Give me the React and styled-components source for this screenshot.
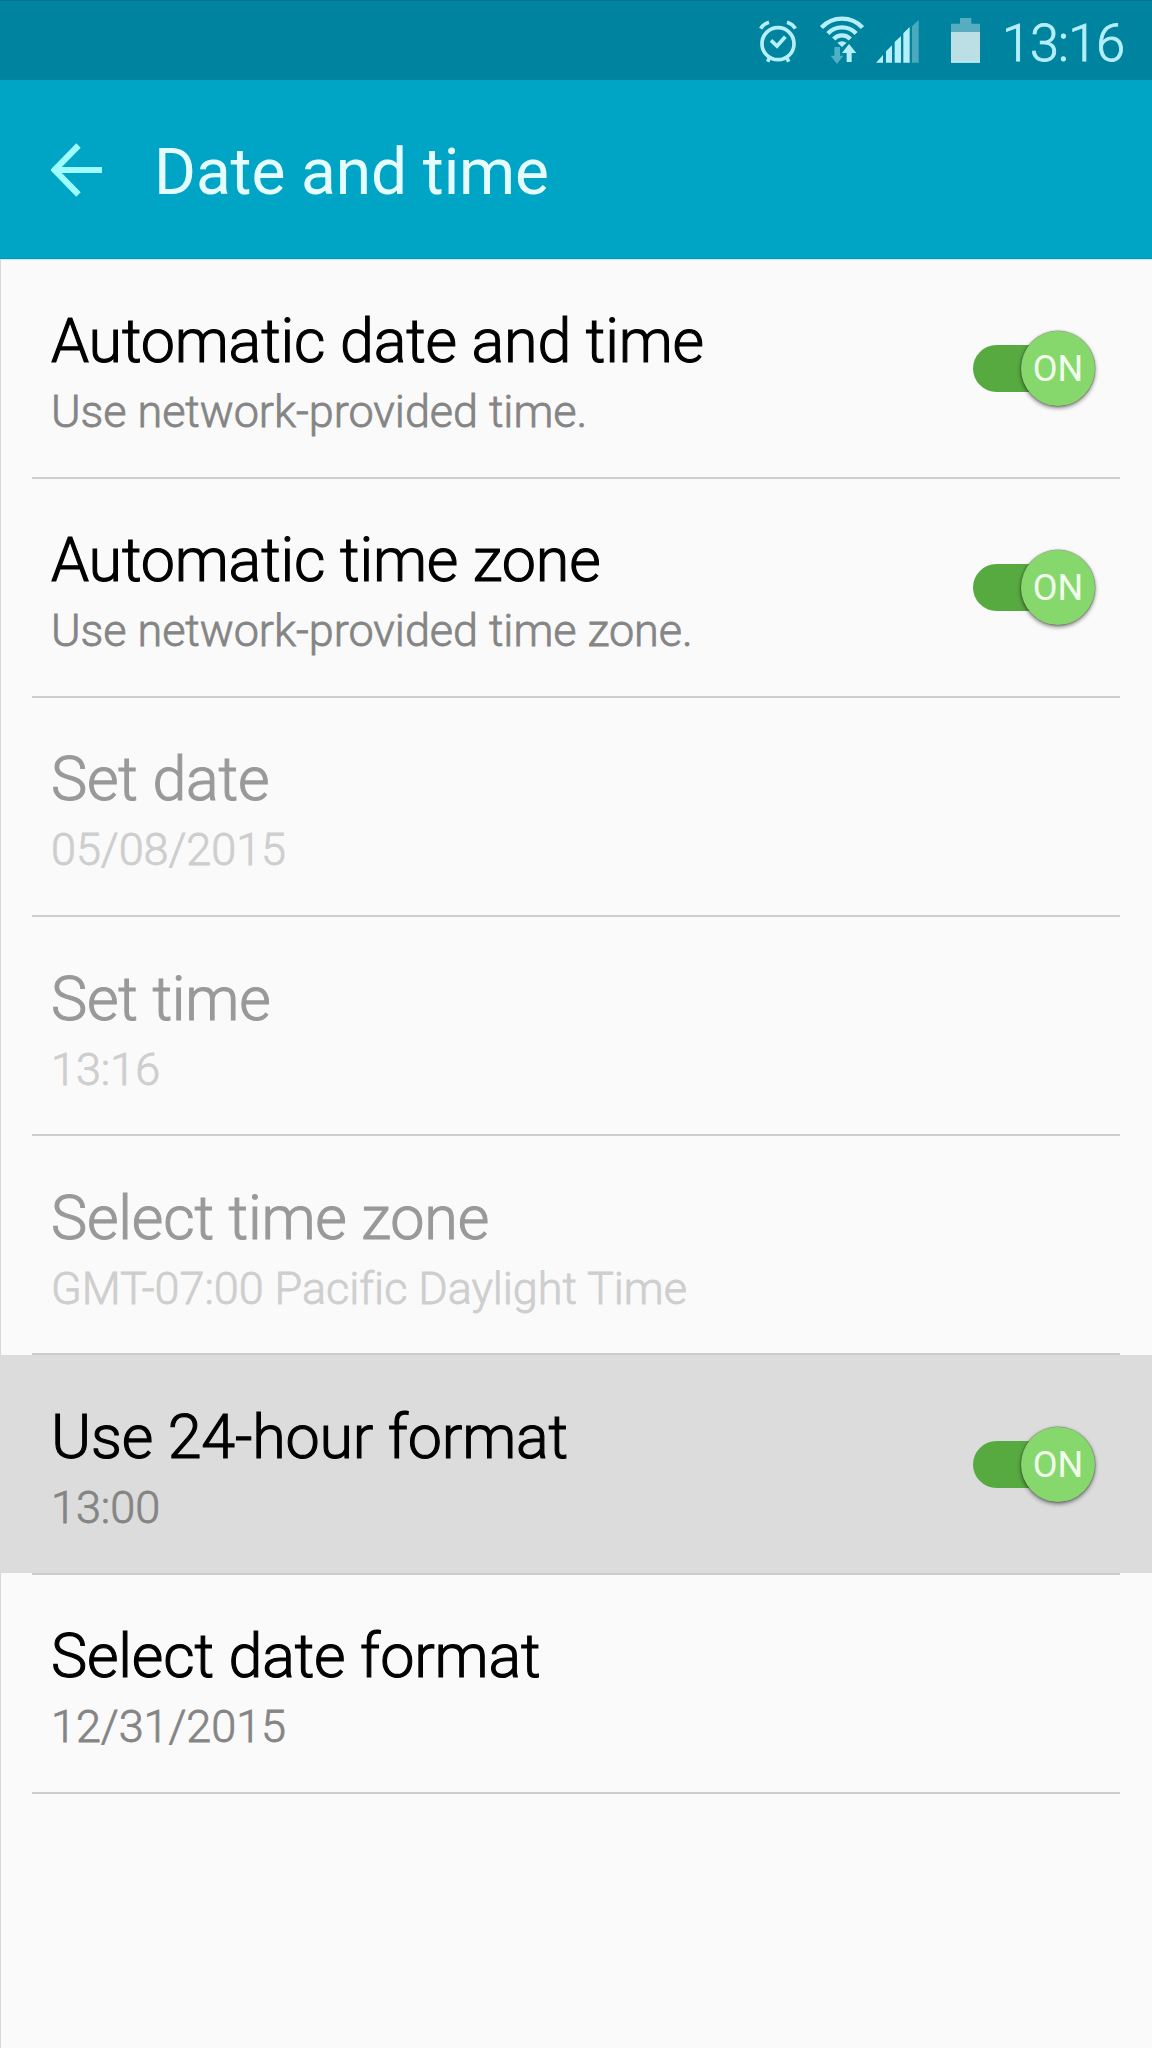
import React, { useState } from "react";
import styled, { createGlobalStyle } from "styled-components";

const GlobalStyle = createGlobalStyle`
  body {
    margin: 0;
    background: #fafafa;
  }
`;

const Screen = styled.div`
  box-sizing: border-box;
  width: 1152px;
  height: 2048px;
  overflow: hidden;
  background: #fafafa;
  font-family: Roboto, "Liberation Sans", sans-serif;
  box-shadow: inset 1px 0 0 #d8d8d8;
`;

const StatusBar = styled.div`
  box-sizing: border-box;
  display: flex;
  align-items: flex-start;
  justify-content: flex-end;
  height: 80px;
  padding-right: 28px;
  background: #00839e;
  border-top: 1px solid #00728c;
`;

const StatusIcon = styled.svg`
  display: block;
  flex: none;
  height: 80px;
  margin-top: -1px;
  margin-right: ${(props) => props.$gap}px;
`;

const Clock = styled.span`
  width: 122px;
  font-size: 52px;
  font-weight: 300;
  letter-spacing: -0.8px;
  line-height: 60px;
  padding-top: 13px;
  white-space: nowrap;
  color: #b5effb;
  -webkit-text-stroke: 0.8px #b5effb;
`;

const AppBar = styled.header`
  box-sizing: border-box;
  display: flex;
  align-items: center;
  height: 179.4px;
  padding: 0 51px;
  background: #00a5c6;
  border-bottom: 1px solid #0098b8;
  box-shadow: 0 1px 0 #c4e9f2;
`;

const BackIcon = styled.svg`
  display: block;
  width: 52px;
  height: 54px;
  margin-top: 1px;
  margin-right: 51px;
`;

const Title = styled.h1`
  margin: 0;
  padding-top: 8px;
  font-size: 64px;
  line-height: 76px;
  font-weight: 400;
  letter-spacing: -0.1px;
  color: #e6fdff;
`;

const Row = styled.div`
  box-sizing: border-box;
  display: flex;
  align-items: center;
  justify-content: space-between;
  height: 217.2px;
  padding: 0 57px 0 51px;
  background: ${(props) => (props.$pressed ? "#dcdcdc" : "transparent")};
`;

const Divider = styled.div`
  height: 2px;
  margin: 0 32px;
  background: #cdcdcd;
`;

const Labels = styled.div`
  padding-top: 11px;
`;

const Label = styled.div`
  font-size: 61px;
  font-weight: 300;
  letter-spacing: -0.2px;
  line-height: 72px;
  color: ${(props) => (props.$disabled ? "#999999" : "#000000")};
  -webkit-text-stroke: 1.1px currentColor;
`;

const Summary = styled.div`
  padding-top: 5px;
  font-size: 45px;
  font-weight: 300;
  letter-spacing: -0.05px;
  line-height: 60px;
  color: ${(props) => (props.$disabled ? "#cecece" : "#858585")};
  -webkit-text-stroke: 0.8px currentColor;
`;

const Switch = styled.button`
  display: flex;
  align-items: center;
  justify-content: flex-end;
  width: 122px;
  height: 47px;
  margin-top: 1px;
  padding: 0;
  border: none;
  border-radius: 24px;
  background: linear-gradient(90deg, #57aa40 75px, transparent 75px);
`;

const Thumb = styled.span`
  flex: none;
  width: 74px;
  height: 75px;
  border-radius: 50%;
  background: #86d86d;
  box-shadow: 0 0 1px 0.5px rgba(60, 60, 60, 0.5), 0 2px 4px rgba(0, 0, 0, 0.5);
  font-family: Roboto, "Liberation Sans", sans-serif;
  font-size: 36px;
  line-height: 76px;
  text-align: center;
  color: #f2ffec;
`;

const items = [
  {
    id: "auto-date",
    label: "Automatic date and time",
    summary: "Use network-provided time.",
    toggle: true,
  },
  {
    id: "auto-zone",
    label: "Automatic time zone",
    summary: "Use network-provided time zone.",
    toggle: true,
  },
  { id: "date", label: "Set date", summary: "05/08/2015", disabled: true },
  { id: "time", label: "Set time", summary: "13:16", disabled: true },
  {
    id: "zone",
    label: "Select time zone",
    summary: "GMT-07:00 Pacific Daylight Time",
    disabled: true,
  },
  {
    id: "hour-format",
    label: "Use 24-hour format",
    summary: "13:00",
    toggle: true,
  },
  { id: "date-format", label: "Select date format", summary: "12/31/2015" },
];

const AlarmIcon = () => (
  <StatusIcon $gap={23} width="38" viewBox="58 0 114 240">
    <g fill="none" stroke="#b5effb" strokeWidth="11">
      <circle cx="115" cy="131" r="48" />
      <path d="M94 121l18 17 25-28" />
      <path d="M63 86q8-14 25-19M167 86q-8-14-25-19" />
      <path d="M90 172l-6 13M141 172l6 13" />
    </g>
  </StatusIcon>
);

const WifiIcon = () => (
  <StatusIcon $gap={12} width="44" viewBox="240 0 132 240">
    <g fill="none" stroke="#b5effb" strokeWidth="13">
      <path d="M244.6 82.7a84 84 0 0 1 122.8 0" />
      <path d="M263.6 100.4a58 58 0 0 1 84.8 0" />
      <path d="M281.1 116.8a34 34 0 0 1 49.8 0" />
    </g>
    <path d="M292 128q14-9 28 0l-14 13z" fill="#b5effb" />
    <path d="M283 141h17v26h10l-19 25-19-25h11z" fill="#4fb0c5" />
    <path
      d="M327 132l22 27h-14v27h-15v-27h-14z"
      fill="#b5effb"
      stroke="#00839e"
      strokeWidth="3"
      paintOrder="stroke"
    />
  </StatusIcon>
);

const SignalIcon = () => (
  <StatusIcon $gap={32} width="43" viewBox="408 0 129 240">
    <path
      d="M408 188l21-23v23zM438 188v-34l18-18v52zM464 188v-62l19-18v80zM490 188v-88l19-19v107z"
      fill="#b5effb"
    />
    <path d="M516 188V79l20-19v128z" fill="#4ba9bd" />
  </StatusIcon>
);

const BatteryIcon = () => (
  <StatusIcon $gap={22} width="29" viewBox="633 0 87 240">
    <path d="M633 96V71h27V54h34v17h26v25z" fill="#55adbf" />
    <path d="M633 96h87v92h-87z" fill="#bbdfe5" />
    <path d="M633 184h87v4h-87z" fill="#b5effb" />
  </StatusIcon>
);

const SettingsRow = ({ item, pressed, checked, onPress, onToggle }) => (
  <>
    <Row $pressed={pressed} onClick={onPress}>
      <Labels>
        <Label $disabled={item.disabled}>{item.label}</Label>
        <Summary $disabled={item.disabled}>{item.summary}</Summary>
      </Labels>
      {item.toggle && (
        <Switch role="switch" aria-checked={checked} onClick={onToggle}>
          <Thumb>{checked ? "ON" : ""}</Thumb>
        </Switch>
      )}
    </Row>
    <Divider />
  </>
);

const App = () => {
  const [pressed, setPressed] = useState("hour-format");
  const [off, setOff] = useState([]);

  const toggle = (id) => {
    setOff(off.includes(id) ? off.filter((el) => el !== id) : [...off, id]);
  };

  return (
    <Screen>
      <GlobalStyle />
      <StatusBar>
        <AlarmIcon />
        <WifiIcon />
        <SignalIcon />
        <BatteryIcon />
        <Clock>13:16</Clock>
      </StatusBar>
      <AppBar>
        <BackIcon viewBox="0 0 52 54">
          <path
            d="M51 27H4M27.500 2.500L3.500 27l24 24.500"
            fill="none"
            stroke="#9ffcff"
            strokeWidth="6.200"
          />
        </BackIcon>
        <Title>Date and time</Title>
      </AppBar>
      {items.map((item) => (
        <SettingsRow
          key={item.id}
          item={item}
          pressed={pressed === item.id}
          checked={!off.includes(item.id)}
          onPress={() => !item.disabled && setPressed(item.id)}
          onToggle={() => toggle(item.id)}
        />
      ))}
    </Screen>
  );
};

export default App;
